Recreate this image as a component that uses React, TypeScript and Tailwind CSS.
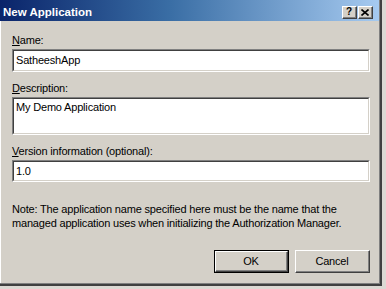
import React from "react";

const font = { fontFamily: '"Liberation Sans", Arial, sans-serif' };

function Sunken({ children, className }: { children?: React.ReactNode; className?: string }) {
  return (
    <div className="border border-t-[#808080] border-l-[#808080] border-b-white border-r-white">
      <div
        className={`border border-t-[#404040] border-l-[#404040] border-b-[#d4d0c8] border-r-[#d4d0c8] bg-white px-[2px] text-[11px] leading-[13px] ${className ?? ""}`}
      >
        {children}
      </div>
    </div>
  );
}

function Field({ accel, rest, children }: { accel: string; rest: string; children: React.ReactNode }) {
  return (
    <div className="flex flex-col gap-[2px]">
      <div className="h-[13px] text-[11px] leading-[13px]">
        <span className="underline underline-offset-[1px]">{accel}</span>
        {rest}
      </div>
      {children}
    </div>
  );
}

function CaptionButton({ children }: { children: React.ReactNode }) {
  return (
    <div className="h-[13px] w-[15px] border border-t-white border-l-white border-b-[#404040] border-r-[#404040] bg-[#d4d0c8]">
      <div className="flex h-full w-full items-center justify-center border-b border-r border-b-[#808080] border-r-[#808080]">
        {children}
      </div>
    </div>
  );
}

export default function App() {
  return (
    <div className="h-[289px] w-[386px] overflow-hidden bg-[#dcd9d3] tracking-[-0.18px] text-black" style={font}>
      <div className="flex h-[286px] w-[382px] flex-col border-b-2 border-r-2 border-b-[#404040] border-r-[#404040]">
        <div className="flex h-full flex-col border-b border-r border-b-[#808080] border-r-[#808080]">
          {/* title bar */}
          <div className="flex h-[21px] shrink-0 items-center bg-[linear-gradient(90deg,#0a246a_0%,#3a6ea5_45%,#a6caf0_100%)] pl-[3px] pr-[6px] pt-[4px]">
            <span className="text-[11.5px] font-bold leading-[13px] tracking-[0px] text-white">New Application</span>
            <div className="ml-auto flex gap-[1px]">
              <CaptionButton>
                <span className="text-[10px] font-bold leading-[10px]">?</span>
              </CaptionButton>
              <CaptionButton>
                <svg width="8" height="7" viewBox="0 0 8 7">
                  <path d="M0.5 0.5 L7.5 6.5 M7.5 0.5 L0.5 6.5" stroke="#000" strokeWidth="1.6" />
                </svg>
              </CaptionButton>
            </div>
          </div>

          {/* body */}
          <div className="flex flex-1 flex-col border-l border-l-white bg-[#d4d0c8] pl-[11px] pr-[9px] pt-[13px]">
            <Field accel="N" rest="ame:">
              <Sunken className="h-[21px] pt-[3px]">SatheeshApp</Sunken>
            </Field>
            <div className="mt-[10px]">
              <Field accel="D" rest="escription:">
                <Sunken className="h-[36px] pt-[2px]">My Demo Application</Sunken>
              </Field>
            </div>
            <div className="mt-[10px]">
              <Field accel="V" rest="ersion information (optional):">
                <Sunken className="h-[20px] pt-[3px]">1.0</Sunken>
              </Field>
            </div>
            <p className="mt-[20px] text-[11px] leading-[14px]">
              Note: The application name specified here must be the name that the managed application uses when initializing the Authorization Manager.
            </p>
            <div className="mt-[20px] flex justify-end gap-[6px]">
              <div className="h-[23px] w-[75px] border border-black">
                <div className="h-full w-full border border-t-white border-l-white border-b-[#404040] border-r-[#404040]">
                  <div className="flex h-full w-full items-center justify-center border-b border-r border-b-[#808080] border-r-[#808080] text-[11px] leading-[13px]">
                    OK
                  </div>
                </div>
              </div>
              <div className="h-[23px] w-[75px] border border-t-white border-l-white border-b-[#404040] border-r-[#404040]">
                <div className="flex h-full w-full items-center justify-center border-b border-r border-b-[#808080] border-r-[#808080] text-[11px] leading-[13px]">
                  Cancel
                </div>
              </div>
            </div>
          </div>
        </div>
      </div>
    </div>
  );
}
